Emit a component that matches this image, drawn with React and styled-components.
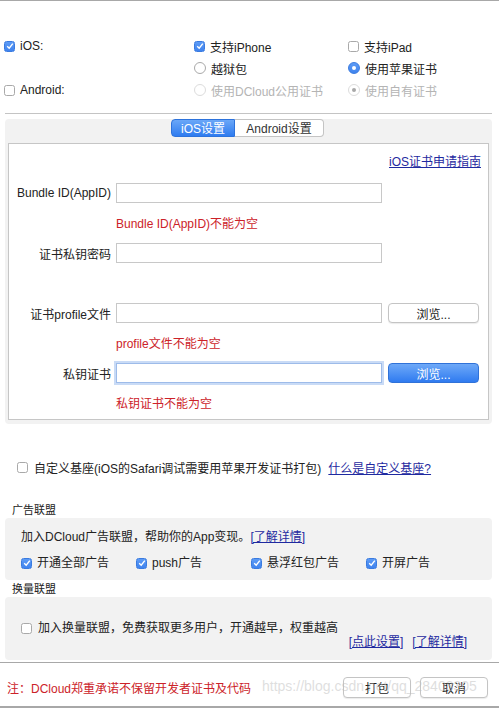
import React from "react";
import styled, { createGlobalStyle, css } from "styled-components";

const GlobalStyle = createGlobalStyle`
  html, body {
    margin: 0;
    padding: 0;
    background: #ffffff;
  }
  body {
    font-family: "Liberation Sans", "Noto Sans CJK SC", sans-serif;
    font-size: 12px;
    color: #222222;
  }
`;

const Window = styled.div`
  width: 499px;
  height: 708px;
  box-sizing: border-box;
  border-top: 1px solid #a8a8a8;
  border-bottom: 2px solid #a8a8a8;
  overflow: hidden;
  position: relative;
`;

const OptionGrid = styled.div`
  display: grid;
  grid-template-columns: 190px 154px 1fr;
  grid-auto-rows: 22px;
  padding: 34px 0 0 4px;
`;

const Option = styled.label`
  display: flex;
  align-items: center;
  gap: 5px;
  color: ${({ disabled }) => (disabled ? "#b4b4b4" : "#222")};
  white-space: nowrap;
`;

const Box = styled.span`
  width: 11px;
  height: 11px;
  box-sizing: border-box;
  border-radius: 2.5px;
  flex-shrink: 0;
  display: inline-flex;
  align-items: center;
  justify-content: center;
  ${({ checked }) =>
    checked
      ? css`
          background: linear-gradient(#5d9bf5, #3f83ee);
          border: 1px solid #3a7be0;
        `
      : css`
          background: #fff;
          border: 1px solid #a9a9a9;
        `}
`;

const Radio = styled.span`
  width: 12px;
  height: 12px;
  box-sizing: border-box;
  border-radius: 50%;
  flex-shrink: 0;
  display: inline-flex;
  align-items: center;
  justify-content: center;
  border: 1px solid ${({ disabled, checked }) =>
    disabled ? "#dcdcdc" : checked ? "#3a7be0" : "#a9a9a9"};
  background: ${({ disabled, checked }) =>
    !disabled && checked ? "linear-gradient(#5d9bf5, #3f83ee)" : "#fff"};
  &::after {
    content: "";
    display: ${({ checked }) => (checked ? "block" : "none")};
    width: 4px;
    height: 4px;
    border-radius: 50%;
    background: ${({ disabled }) => (disabled ? "#a8a8a8" : "#fff")};
  }
`;

const Check = ({ checked }) => (
  <Box checked={checked}>
    {checked && (
      <svg width="8" height="8" viewBox="0 0 8 8">
        <path d="M1.2 4.2 L3.2 6.2 L6.8 1.6" fill="none" stroke="#fff" strokeWidth="1.4" />
      </svg>
    )}
  </Box>
);

const Divider = styled.div`
  height: 1px;
  background: #c4c4c4;
  margin: 12px 7px 0 5px;
`;

const GroupBox = styled.div`
  margin: 14px 7px 0 5px;
  background: #f2f2f2;
  border-radius: 4px;
  padding: 0 3px 4px;
`;

const Tabs = styled.div`
  display: flex;
  justify-content: center;
  margin-top: -9px;
  padding-right: 2px;
`;

const Tab = styled.div`
  height: 18px;
  line-height: 18px;
  box-sizing: border-box;
  font-size: 12px;
  text-align: center;
  width: ${({ w }) => w}px;
  ${({ active }) =>
    active
      ? css`
          background: linear-gradient(#6aa7f8, #2f7cf0);
          color: #fff;
          border-radius: 4px 0 0 4px;
          border: 1px solid #2d73dc;
        `
      : css`
          background: #fff;
          color: #333;
          border-radius: 0 4px 4px 0;
          border: 1px solid #c4c4c4;
          border-left: none;
        `}
`;

const Sheet = styled.div`
  margin-top: 6px;
  background: #fff;
  border: 1px solid #c6c6c6;
  padding: 10px 7px 7px 0;
`;

const GuideRow = styled.div`
  display: flex;
  justify-content: flex-end;
  line-height: 17px;
`;

const Link = styled.a`
  color: #1f2aa0;
  text-decoration: underline;
  cursor: pointer;
`;

const Field = styled.div`
  display: grid;
  grid-template-columns: 102px 266px 92px;
  column-gap: 5px;
  align-items: center;
  height: 20px;
  margin-top: ${({ first }) => (first ? "12px" : "0")};
  & > :nth-child(3) {
    margin-left: 1px;
  }
`;

const FieldLabel = styled.span`
  text-align: right;
  white-space: nowrap;
`;

const Input = styled.div`
  height: 20px;
  box-sizing: border-box;
  background: #fff;
  border: 1px solid ${({ focused }) => (focused ? "#9dbbe9" : "#c8c8c8")};
  box-shadow: ${({ focused }) => (focused ? "0 0 0 2px #c9dbf6" : "none")};
`;

const Button = styled.div`
  height: 20px;
  box-sizing: border-box;
  border-radius: 4px;
  display: flex;
  align-items: center;
  justify-content: center;
  font-size: 12px;
  ${({ primary }) =>
    primary
      ? css`
          background: linear-gradient(#6ea9f8, #2f7bf0);
          color: #fff;
          border: 1px solid #3072d8;
        `
      : css`
          background: #fff;
          color: #222;
          border: 1px solid #c4c4c4;
          box-shadow: 0 1px 1px rgba(0, 0, 0, 0.08);
        `}
`;

const ErrorText = styled.div`
  color: #cc2229;
  line-height: 16px;
  height: 16px;
  padding-left: 107px;
  margin: 13px 0 ${({ last }) => (last ? "0" : "11px")};
`;

const BaseRow = styled.div`
  display: flex;
  align-items: center;
  gap: 6px;
  padding: 35px 0 0 17px;
  white-space: nowrap;
  & ${Link} {
    margin-left: 1px;
  }
`;

const SectionTitle = styled.div`
  font-size: 11px;
  line-height: 14px;
  color: #222;
  padding-left: 12px;
  margin-top: ${({ top }) => top}px;
`;

const Panel = styled.div`
  margin: 1px 7px 0 5px;
  background: #f2f2f2;
  border-radius: 4px;
  padding: ${({ pad }) => pad};
  height: ${({ h }) => h}px;
  box-sizing: border-box;
`;

const PanelLine = styled.div`
  line-height: 16px;
  white-space: nowrap;
`;

const AdOptions = styled.div`
  display: grid;
  grid-template-columns: repeat(4, 115px);
  margin-top: 10px;
  line-height: 16px;
`;

const SwapRow = styled.div`
  display: flex;
  align-items: center;
  gap: 6px;
  line-height: 16px;
`;

const SwapLinks = styled.div`
  display: flex;
  justify-content: flex-end;
  gap: 9px;
  padding-right: 3px;
  margin-top: -2px;
  line-height: 16px;
`;

const FooterRule = styled.div`
  height: 1px;
  background: #a8a8a8;
  margin-top: 2px;
`;

const Footer = styled.div`
  display: flex;
  align-items: center;
  padding: 14px 11px 0 7px;
  position: relative;
`;

const Notice = styled.span`
  color: #cc2229;
  flex: 1;
  white-space: nowrap;
`;

const FooterButtons = styled.div`
  display: flex;
  gap: 9px;
`;

const FooterButton = styled(Button)`
  width: 68px;
  height: 21px;
  border-radius: 4px;
`;

const Watermark = styled.span`
  position: absolute;
  left: 262px;
  top: 15px;
  font-size: 14px;
  color: rgba(190, 190, 190, 0.5);
  pointer-events: none;
  white-space: nowrap;
`;

export default function App() {
  return (
    <>
      <GlobalStyle />
      <Window>
        <OptionGrid>
          <Option>
            <Check checked />
            iOS:
          </Option>
          <Option>
            <Check checked />
            支持iPhone
          </Option>
          <Option>
            <Check />
            支持iPad
          </Option>
          <span />
          <Option>
            <Radio />
            越狱包
          </Option>
          <Option>
            <Radio checked />
            使用苹果证书
          </Option>
          <Option>
            <Check />
            Android:
          </Option>
          <Option disabled>
            <Radio disabled />
            使用DCloud公用证书
          </Option>
          <Option disabled>
            <Radio disabled checked />
            使用自有证书
          </Option>
        </OptionGrid>

        <Divider />

        <GroupBox>
          <Tabs>
            <Tab active w={64}>iOS设置</Tab>
            <Tab w={89}>Android设置</Tab>
          </Tabs>
          <Sheet>
            <GuideRow>
              <Link>iOS证书申请指南</Link>
            </GuideRow>
            <Field first>
              <FieldLabel>Bundle ID(AppID)</FieldLabel>
              <Input />
            </Field>
            <ErrorText>Bundle ID(AppID)不能为空</ErrorText>
            <Field>
              <FieldLabel>证书私钥密码</FieldLabel>
              <Input />
            </Field>
            <ErrorText />
            <Field>
              <FieldLabel>证书profile文件</FieldLabel>
              <Input />
              <Button>浏览...</Button>
            </Field>
            <ErrorText>profile文件不能为空</ErrorText>
            <Field>
              <FieldLabel>私钥证书</FieldLabel>
              <Input focused />
              <Button primary>浏览...</Button>
            </Field>
            <ErrorText last>私钥证书不能为空</ErrorText>
          </Sheet>
        </GroupBox>

        <BaseRow>
          <Check />
          自定义基座(iOS的Safari调试需要用苹果开发证书打包)
          <Link>什么是自定义基座?</Link>
        </BaseRow>

        <SectionTitle top={27}>广告联盟</SectionTitle>
        <Panel pad="11px 0 0 16px" h={62}>
          <PanelLine>
            加入DCloud广告联盟，帮助你的App变现。<Link>[了解详情]</Link>
          </PanelLine>
          <AdOptions>
            <Option>
              <Check checked />
              开通全部广告
            </Option>
            <Option>
              <Check checked />
              push广告
            </Option>
            <Option>
              <Check checked />
              悬浮红包广告
            </Option>
            <Option>
              <Check checked />
              开屏广告
            </Option>
          </AdOptions>
        </Panel>

        <SectionTitle top={2}>换量联盟</SectionTitle>
        <Panel pad="23px 22px 0 16px" h={63}>
          <SwapRow>
            <Check />
            加入换量联盟，免费获取更多用户，开通越早，权重越高
          </SwapRow>
          <SwapLinks>
            <Link>[点此设置]</Link>
            <Link>[了解详情]</Link>
          </SwapLinks>
        </Panel>

        <FooterRule />
        <Footer>
          <Notice>注：DCloud郑重承诺不保留开发者证书及代码</Notice>
          <FooterButtons>
            <FooterButton>打包</FooterButton>
            <FooterButton>取消</FooterButton>
          </FooterButtons>
          <Watermark>https://blog.csdn.net/qq_28403305</Watermark>
        </Footer>
      </Window>
    </>
  );
}
